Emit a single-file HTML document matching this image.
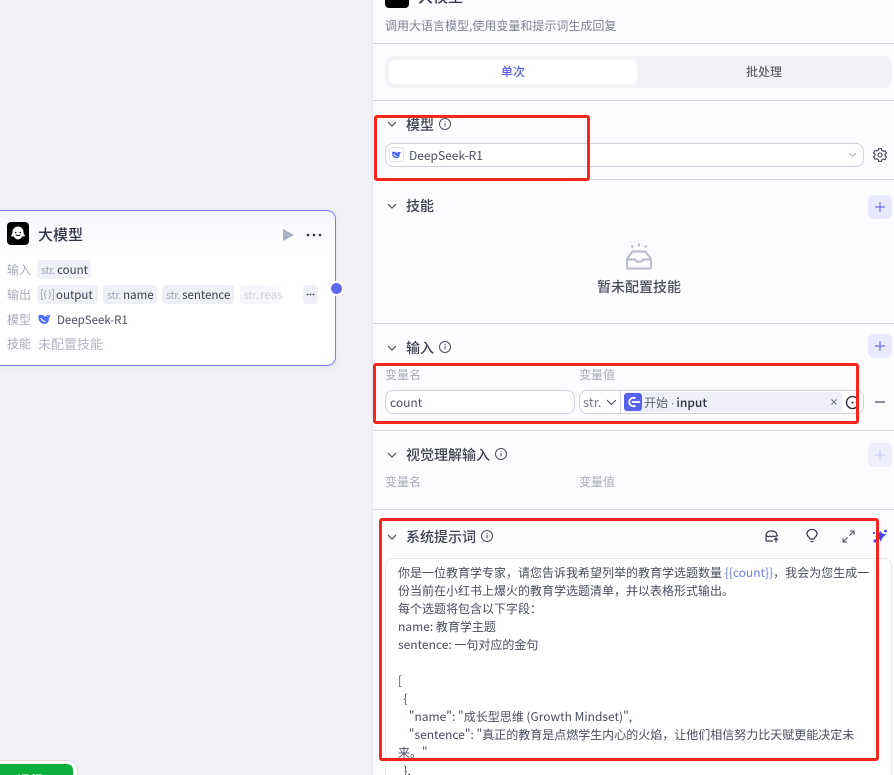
<!DOCTYPE html>
<html lang="zh"><head><meta charset="utf-8"><style>
html,body{margin:0;padding:0;width:894px;height:775px;overflow:hidden}
#r{position:absolute;left:0;top:0;width:894px;height:775px;overflow:hidden;background:#f0f0f5;font-family:"Noto Sans CJK SC","Liberation Sans",sans-serif;color:#4a4d5e}
.a{position:absolute;white-space:nowrap}
svg{position:absolute;overflow:visible}
.line{position:absolute;left:373px;width:521px;height:1px;background:#d6d8e6}
.tag{position:absolute;height:19px;line-height:20px;background:#eff0f7;border-radius:4px;font-size:11.5px;color:#3a3d4e;white-space:nowrap;padding:0 4px;box-sizing:border-box}
.tag i{font-style:normal;color:#a3a7ba;font-size:11px;letter-spacing:-.4px;margin-right:2px}
.lab{position:absolute;left:7px;font-size:12px;line-height:16px;color:#a8abb8}
.h{position:absolute;font-size:14px;line-height:20px;color:#3f4252;font-weight:500;white-space:nowrap}
.sub{position:absolute;font-size:12px;line-height:16px;color:#a8abb8;white-space:nowrap}
.plus{position:absolute;left:868px;width:24px;height:24px;border-radius:6px;background:#e9e9fd}
.box{position:absolute;box-sizing:border-box;background:#fff;border:1px solid #cfd1de;border-radius:8px}
.rb{position:absolute;box-sizing:border-box;border:3px solid #f5261c;border-radius:3px}
.p{position:absolute;left:398px;font-size:12px;line-height:18px;color:#4a4d5e;white-space:pre}
</style></head><body><div id="r">

<!-- node -->
<div class="a" style="left:-10px;top:210px;width:346px;height:156px;box-sizing:border-box;border:1px solid #7d7cf0;border-radius:9px;background:linear-gradient(#f5f5fd,#fff 30%);box-shadow:0 2px 6px rgba(90,90,160,.06)"></div>
<div class="a" style="left:7px;top:222px;width:22px;height:23px;border-radius:4px;background:#000"></div>
<svg style="left:7px;top:222px" width="22" height="23" viewBox="0 0 22 23"><path d="M11 4.500c-3.400 0-5.500 2.600-5.500 5.600 0 1.600-.7 2.900-1.800 3.800.9.700 2 .8 2.900.4 1 1.800 2.500 3.200 4.400 3.200s3.400-1.400 4.400-3.200c.9.400 2 .3 2.900-.4-1.100-.9-1.800-2.200-1.800-3.800 0-3-2.100-5.600-5.500-5.600z" fill="#fff"/><circle cx="8.700" cy="10.500" r=".8" fill="#000"/><circle cx="13.300" cy="10.500" r=".8" fill="#000"/><path d="M8.800 12.700c1 1.100 3.400 1.100 4.400 0" stroke="#000" stroke-width="1" fill="none"/></svg>
<div class="a" style="left:38px;top:224px;font-size:15px;line-height:22px;font-weight:500;color:#33364a">大模型</div>
<svg style="left:283px;top:229px" width="11" height="12" viewBox="0 0 11 12"><path d="M0 0L11 6L0 12Z" fill="#abb0c6"/></svg>
<svg style="left:306px;top:233px" width="16" height="4" viewBox="0 0 16 4"><circle cx="2" cy="2" r="1.300" fill="#33364a"/><circle cx="8" cy="2" r="1.300" fill="#33364a"/><circle cx="14" cy="2" r="1.300" fill="#33364a"/></svg>

<div class="lab" style="top:262px">输入</div>
<div class="tag" style="left:37px;top:260px;width:54px"><i>str.</i>count</div>
<div class="lab" style="top:287px">输出</div>
<div class="tag" style="left:37px;top:285px;width:61px;padding-left:19px">output</div>
<svg style="left:41px;top:289px" width="13" height="11" viewBox="0 0 13 11" fill="none" stroke="#a3a7ba" stroke-width=".9"><path d="M2 .5H.5v10H2M11 .5h1.500v10H11M5 1.500c-1 0-1 .8-1 2s-.3 2-1 2c.7 0 1 .8 1 2s0 2 1 2M8 1.500c1 0 1 .8 1 2s.3 2 1 2c-.7 0-1 .8-1 2s0 2-1 2"/></svg>
<div class="tag" style="left:103px;top:285px;width:54px"><i>str.</i>name</div>
<div class="tag" style="left:162px;top:285px;width:72px"><i>str.</i>sentence</div>
<div class="tag" style="left:240px;top:285px;width:46px;background:linear-gradient(90deg,#f5f5fb 60%,#fff);color:#cfd1da;overflow:hidden"><i style="color:#d0d2dc">str.</i>reas</div>
<div class="tag" style="left:303px;top:285px;width:15px;padding:0"></div>
<svg style="left:306px;top:293px" width="10" height="3"><circle cx="1.500" cy="1.500" r=".9" fill="#33364a"/><circle cx="4.500" cy="1.500" r=".9" fill="#33364a"/><circle cx="7.500" cy="1.500" r=".9" fill="#33364a"/></svg>
<div class="lab" style="top:312px">模型</div>
<svg style="left:38px;top:314px" width="13" height="11" viewBox="0 0 13 11"><path d="M12.500 1c-.5.400-1 .5-1.500.4-.5-.5-1.400-.6-2.100-.1L7.400 2.800C6 1.600 3.400 0 .8 1.200 0 3.500.6 6.500 2.500 8.300c2.200 2.200 5.800 2.200 7.400.1.900-1.200 1-2.800 1-4.100.6-.9 1.200-1.900 1.600-3.300z" fill="#4d6bfe"/><path d="M2.800 4c.8 1.900 2.600 3.500 5 3.700M9.500 2.500v.6" stroke="#fff" stroke-width="1.100" fill="none"/></svg>
<div class="a" style="left:57px;top:312px;font-size:11.5px;line-height:16px;color:#4a4d5e">DeepSeek-R1</div>
<div class="lab" style="top:336px">技能</div>
<div class="a" style="left:38px;top:335px;font-size:13px;line-height:18px;color:#b2b5c2">未配置技能</div>
<div class="a" style="left:329px;top:281px;width:15px;height:15px;box-sizing:border-box;border:2px solid #fff;border-radius:50%;background:#6069ec"></div>

<!-- bottom-left green button -->
<div class="a" style="left:-20px;top:760px;width:98px;height:40px;box-sizing:border-box;background:#fff;border:1px solid #dcdce8;border-radius:10px"></div>
<div class="a" style="left:-20px;top:764px;width:93px;height:30px;background:#0cb03c;border-radius:6px"></div>
<div class="a" style="left:17px;top:771px;font-size:13px;line-height:18px;color:#fff;font-weight:700">运行</div>

<!-- panel -->
<div class="a" style="left:372px;top:0;width:522px;height:775px;background:#fcfcff;border-left:1px solid #e4e5f3;box-sizing:border-box"></div>

<div class="a" style="left:385px;top:-14px;width:24px;height:22px;border-radius:4px;background:#000"></div>
<div class="a" style="left:418px;top:-13px;font-size:15px;line-height:20px;font-weight:500;color:#33364a">大模型</div>
<svg style="left:799px;top:-8px" width="14" height="14"><circle cx="7" cy="0" r="6" fill="none" stroke="#33364a" stroke-width="1.200"/></svg>
<div class="a" style="left:385px;top:17px;font-size:12px;line-height:17px;color:#7e8192">调用大语言模型,使用变量和提示词生成回复</div>
<div class="line" style="top:43px"></div>

<div class="a" style="left:385px;top:56px;width:507px;height:32px;border-radius:8px;background:#f3f3f7"></div>
<div class="a" style="left:389px;top:60px;width:248px;height:24px;border-radius:6px;background:#fff;text-align:center;font-size:12px;line-height:24px;font-weight:500;color:#5b5fe8">单次</div>
<div class="a" style="left:640px;top:60px;width:248px;height:24px;text-align:center;font-size:12px;line-height:24px;font-weight:500;color:#62656f">批处理</div>
<div class="line" style="top:100px"></div>

<!-- model -->
<svg style="left:387px;top:120px" width="10" height="8" viewBox="0 0 10 8" fill="none"><path d="M1 2l4 4 4-4" stroke="#4a4d5e" stroke-width="1.200"/></svg>
<div class="h" style="left:406px;top:115px">模型</div>
<svg style="left:439px;top:118px" width="12" height="12" viewBox="0 0 12 12" fill="none"><circle cx="6" cy="6" r="5.500" stroke="#4a4d5e"/><path d="M6 5v3.500M6 3v1" stroke="#4a4d5e"/></svg>
<div class="box" style="left:385px;top:143px;width:479px;height:24px"></div>
<div class="a" style="left:389px;top:147px;width:15px;height:15px;box-sizing:border-box;border:1px solid #e4e5ee;border-radius:3px;background:#fff"></div>
<svg style="left:391px;top:151px" width="11" height="8" viewBox="0 0 13 11"><path d="M12.500 1c-.5.400-1 .5-1.500.4-.5-.5-1.400-.6-2.100-.1L7.400 2.800C6 1.600 3.400 0 .8 1.200 0 3.500.6 6.500 2.500 8.300c2.200 2.200 5.800 2.200 7.400.1.900-1.200 1-2.800 1-4.100.6-.9 1.200-1.900 1.600-3.300z" fill="#4d6bfe"/><path d="M2.800 4c.8 1.900 2.600 3.500 5 3.700" stroke="#fff" stroke-width="1.100" fill="none"/></svg>
<div class="a" style="left:409px;top:147px;font-size:12px;line-height:17px;color:#4a4d5e">DeepSeek-R1</div>
<svg style="left:848px;top:152px" width="9" height="6" viewBox="0 0 9 6" fill="none"><path d="M1 1l3.500 3.500L8 1" stroke="#a8abb8"/></svg>
<svg style="left:873px;top:148px" width="14" height="14" viewBox="0 0 14 14" fill="none"><path d="M5.600 1h2.800l.4 1.700 1.500.9 1.700-.5 1.400 2.400-1.300 1.200v1.600l1.300 1.200-1.400 2.400-1.700-.5-1.500.9L8.400 13.600H5.600l-.4-1.700-1.500-.9-1.700.5L.6 9.100l1.300-1.200V6.300L.6 5.100 2 2.700l1.700.5 1.500-.9z" stroke="#3f4252" stroke-width="1.100" transform="translate(0 -.3)"/><circle cx="7" cy="7" r="2" stroke="#3f4252" stroke-width="1.100"/></svg>
<div class="line" style="top:179px"></div>

<!-- skills -->
<svg style="left:387px;top:202px" width="10" height="8" viewBox="0 0 10 8" fill="none"><path d="M1 2l4 4 4-4" stroke="#4a4d5e" stroke-width="1.200"/></svg>
<div class="h" style="left:406px;top:196px">技能</div>
<div class="plus" style="top:195px"></div>
<svg style="left:874px;top:201px" width="12" height="12" fill="none"><path d="M6 1v10M1 6h10" stroke="#6d6cf5" stroke-width="1.200"/></svg>
<svg style="left:625px;top:243px" width="28" height="27" viewBox="0 0 28 27" fill="none" stroke="#bcbfcf" stroke-width="2.200" stroke-linejoin="round"><path d="M7.500 8.500h13L26 16v8.500c0 .6-.4 1-1 1H3c-.6 0-1-.4-1-1V16z"/><path d="M2 16.500h8c1 3 7 3 8 0h8"/><path d="M14 .5v3M6.500 2.500l1.500 2M21.500 2.500l-1.500 2"/></svg>
<div class="a" style="left:597px;top:277px;font-size:14px;line-height:20px;font-weight:500;color:#4a4d5e">暂未配置技能</div>
<div class="line" style="top:323px"></div>

<!-- input -->
<svg style="left:387px;top:344px" width="10" height="8" viewBox="0 0 10 8" fill="none"><path d="M1 2l4 4 4-4" stroke="#4a4d5e" stroke-width="1.200"/></svg>
<div class="h" style="left:406px;top:338px">输入</div>
<svg style="left:439px;top:341px" width="12" height="12" viewBox="0 0 12 12" fill="none"><circle cx="6" cy="6" r="5.500" stroke="#4a4d5e"/><path d="M6 5v3.500M6 3v1" stroke="#4a4d5e"/></svg>
<div class="plus" style="top:334px"></div>
<svg style="left:874px;top:340px" width="12" height="12" fill="none"><path d="M6 1v10M1 6h10" stroke="#6d6cf5" stroke-width="1.200"/></svg>
<div class="sub" style="left:385px;top:367px">变量名</div>
<div class="sub" style="left:579px;top:367px">变量值</div>
<div class="box" style="left:385px;top:390px;width:190px;height:24px"></div>
<div class="a" style="left:390px;top:394px;font-size:12px;line-height:17px;color:#4a4d5e">count</div>
<div class="box" style="left:579px;top:390px;width:285px;height:24px"></div>
<div class="a" style="left:620px;top:391px;width:1px;height:22px;background:#cfd1de"></div>
<div class="a" style="left:583px;top:393px;font-size:13px;line-height:18px;color:#7a7d8c">str.</div>
<svg style="left:606px;top:399px" width="11" height="7" viewBox="0 0 11 7" fill="none"><path d="M1 1l4.500 4.500L10 1" stroke="#4a4d5e" stroke-width="1.100"/></svg>
<div class="a" style="left:624px;top:392px;width:218px;height:20px;border-radius:3px;background:#eeeff8"></div>
<div class="a" style="left:624px;top:393px;width:18px;height:18px;border-radius:3px;background:#5a63ee"></div>
<svg style="left:627px;top:396px" width="14" height="12" viewBox="0 0 14 12" fill="none"><path d="M8.500 2.300A4.200 4.200 0 1 0 8.500 9.700" stroke="#fff" stroke-width="1.800"/><path d="M5 6h8" stroke="#fff" stroke-width="1.800"/></svg>
<div class="a" style="left:644px;top:394px;font-size:12px;line-height:17px;color:#5e6172">开始 <span style="font-family:'Liberation Sans',sans-serif">·</span> <span style="color:#2f3242;font-weight:500;margin-left:-1px">input</span></div>
<svg style="left:831px;top:399px" width="6" height="6" fill="none"><path d="M.5.500l5 5M5.500.500l-5 5" stroke="#6a6d7d"/></svg>
<svg style="left:845px;top:395px" width="15" height="15" viewBox="0 0 15 15" fill="none"><circle cx="7.500" cy="7.500" r="6" stroke="#20222e" stroke-width="1.300"/><circle cx="7.500" cy="7.500" r="1" fill="#20222e"/></svg>
<div class="a" style="left:875px;top:401px;width:10px;height:1.500px;background:#8a8d9b"></div>
<div class="line" style="top:430px"></div>

<!-- vision -->
<svg style="left:387px;top:451px" width="10" height="8" viewBox="0 0 10 8" fill="none"><path d="M1 2l4 4 4-4" stroke="#4a4d5e" stroke-width="1.200"/></svg>
<div class="h" style="left:406px;top:445px">视觉理解输入</div>
<svg style="left:495px;top:448px" width="12" height="12" viewBox="0 0 12 12" fill="none"><circle cx="6" cy="6" r="5.500" stroke="#4a4d5e"/><path d="M6 5v3.500M6 3v1" stroke="#4a4d5e"/></svg>
<div class="plus" style="top:443px;background:#eeeefc"></div>
<svg style="left:874px;top:449px" width="12" height="12" fill="none"><path d="M6 1v10M1 6h10" stroke="#cfcffa" stroke-width="1.200"/></svg>
<div class="sub" style="left:385px;top:474px">变量名</div>
<div class="sub" style="left:579px;top:474px">变量值</div>
<div class="line" style="top:509px"></div>

<!-- system prompt -->
<svg style="left:387px;top:533px" width="10" height="8" viewBox="0 0 10 8" fill="none"><path d="M1 2l4 4 4-4" stroke="#4a4d5e" stroke-width="1.200"/></svg>
<div class="h" style="left:406px;top:527px">系统提示词</div>
<svg style="left:481px;top:530px" width="12" height="12" viewBox="0 0 12 12" fill="none"><circle cx="6" cy="6" r="5.500" stroke="#4a4d5e"/><path d="M6 5v3.500M6 3v1" stroke="#4a4d5e"/></svg>
<svg style="left:765px;top:530px" width="14" height="13" viewBox="0 0 14 13" fill="none" stroke="#33364a" stroke-width="1.200"><path d="M1 11V5.500C1 3 3 1 5.500 1h2C10 1 12 3 12 5.500V6M1 5.500c2 1.500 3 1.500 4 .5.800.8 2 .8 3 0 1.500 1 3 .5 5-.5M1 11h7"/><path d="M11 12.500V8M9 10L11 8l2 2"/></svg>
<svg style="left:806px;top:529px" width="12" height="14" viewBox="0 0 12 14" fill="none" stroke="#33364a" stroke-width="1.200"><path d="M4 10c0-1.500-3-2.500-3-5.200A5 4.500 0 0 1 11 4.800C11 7.500 8 8.500 8 10z"/><path d="M4.500 12.500h3"/></svg>
<svg style="left:842px;top:530px" width="13" height="13" viewBox="0 0 13 13" fill="none" stroke="#4a4d5e" stroke-width="1.100"><path d="M8 1h4v4M12 1L7.500 5.500M5 12H1V8M1 12l4.500-4.500"/></svg>
<svg style="left:873px;top:529px" width="15" height="15" viewBox="0 0 15 15"><path d="M7 1.500c1 2.500 2.500 3.500 7 4-3.500 1.500-5 3-6 7.500-1.500-3.500-3-5-6.500-5.500C5 6.500 6.500 4.500 7 1.500z" fill="#4344f0"/><circle cx="12.500" cy="2" r="1.500" fill="#4344f0"/><circle cx="2" cy="12" r="1.600" fill="#4344f0"/><circle cx="1" cy="4" r="1.100" fill="#4344f0"/></svg>

<div class="a" style="left:385px;top:558px;width:507px;height:240px;box-sizing:border-box;background:#fff;border:1px solid #e8e9f1;border-radius:8px"></div>
<div class="p" style="top:564px">你是一位教育学专家，请您告诉我希望列举的教育学选题数量 <span style="color:#6f82e8">{{count}}</span>，我会为您生成一</div>
<div class="p" style="top:582px">份当前在小红书上爆火的教育学选题清单，并以表格形式输出。</div>
<div class="p" style="top:600px">每个选题将包含以下字段：</div>
<div class="p" style="top:618px">name: 教育学主题</div>
<div class="p" style="top:636px">sentence: 一句对应的金句</div>
<div class="p" style="top:672px">[</div>
<div class="p" style="top:690px">  {</div>
<div class="p" style="top:708px">    "name": "成长型思维 (Growth Mindset)",</div>
<div class="p" style="top:726px">    "sentence": "真正的教育是点燃学生内心的火焰，让他们相信努力比天赋更能决定未</div>
<div class="p" style="top:744px">来。"</div>
<div class="p" style="top:762px">  },</div>

<!-- red annotations -->
<div class="rb" style="left:374px;top:115px;width:216px;height:66px"></div>
<div class="rb" style="left:373px;top:363px;width:486px;height:61px"></div>
<div class="rb" style="left:379px;top:518px;width:500px;height:243px"></div>
</div></body></html>
